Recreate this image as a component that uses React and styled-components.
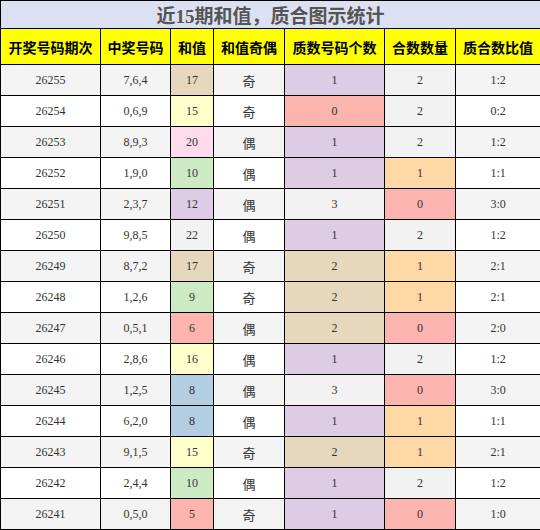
import React from "react";
import styled, { createGlobalStyle } from "styled-components";

const GlobalStyle = createGlobalStyle`
    body {
        margin: 0;
        background: #fff;
    }
`;

// Pastel1 palette used to tint the value cells
const SUM_COLORS = {
    5: "#fbb4ae",
    6: "#fbb4ae",
    8: "#b3cde3",
    9: "#ccebc5",
    10: "#ccebc5",
    12: "#decbe4",
    15: "#ffffcc",
    16: "#ffffcc",
    17: "#e5d8bd",
    20: "#fddaec",
    22: "#f2f2f2",
};
const PRIME_COLORS = { 0: "#fbb4ae", 1: "#decbe4", 2: "#e5d8bd", 3: "#f2f2f2" };
const COMPOSITE_COLORS = { 0: "#fbb4ae", 1: "#fed9a6", 2: "#f2f2f2" };

const rows = [
    ["26255", "7,6,4", 17, "奇", 1, 2],
    ["26254", "0,6,9", 15, "奇", 0, 2],
    ["26253", "8,9,3", 20, "偶", 1, 2],
    ["26252", "1,9,0", 10, "偶", 1, 1],
    ["26251", "2,3,7", 12, "偶", 3, 0],
    ["26250", "9,8,5", 22, "偶", 1, 2],
    ["26249", "8,7,2", 17, "奇", 2, 1],
    ["26248", "1,2,6", 9, "奇", 2, 1],
    ["26247", "0,5,1", 6, "偶", 2, 0],
    ["26246", "2,8,6", 16, "偶", 1, 2],
    ["26245", "1,2,5", 8, "偶", 3, 0],
    ["26244", "6,2,0", 8, "偶", 1, 1],
    ["26243", "9,1,5", 15, "奇", 2, 1],
    ["26242", "2,4,4", 10, "偶", 1, 2],
    ["26241", "0,5,0", 5, "奇", 1, 0],
];

const headers = ["开奖号码期次", "中奖号码", "和值", "和值奇偶", "质数号码个数", "合数数量", "质合数比值"];
const widths = [100, 70, 43, 71, 100, 71, 85];

const App = () => {
    return (
        <>
            <GlobalStyle />
            <Table>
                <colgroup>
                    {widths.map((w, i) => (
                        <col key={i} style={{ width: w }} />
                    ))}
                </colgroup>
                <thead>
                    <tr>
                        <Title colSpan={7}>近15期和值，质合图示统计</Title>
                    </tr>
                    <tr>
                        {headers.map((h) => (
                            <Head key={h}>{h}</Head>
                        ))}
                    </tr>
                </thead>
                <tbody>
                    {rows.map(([issue, nums, sum, parity, prime, comp], i) => (
                        <Row key={issue} $striped={i % 2 === 0}>
                            <Cell>{issue}</Cell>
                            <Cell>{nums}</Cell>
                            <Cell $bg={SUM_COLORS[sum]}>{sum}</Cell>
                            <Parity>{parity}</Parity>
                            <Cell $bg={PRIME_COLORS[prime]}>{prime}</Cell>
                            <Cell $bg={COMPOSITE_COLORS[comp]}>{comp}</Cell>
                            <Cell>{prime}:{comp}</Cell>
                        </Row>
                    ))}
                </tbody>
            </Table>
        </>
    );
};

const Table = styled.table`
    width: 540px;
    table-layout: fixed;
    border-collapse: collapse;
    border: 1px solid #000;
`;

const Title = styled.th`
    height: 27px;
    padding: 0;
    background: #dce1f1;
    border: 1px solid #000;
    color: #555;
    font-family: "Liberation Serif", "Noto Sans CJK SC", serif;
    font-size: 19px;
    font-weight: bold;
    text-align: center;
    vertical-align: middle;
`;

const Head = styled.th`
    height: 35px;
    padding: 0;
    background: #ffff00;
    border: 1px solid #000;
    color: #000;
    font-family: "Noto Sans CJK SC", sans-serif;
    font-size: 14px;
    font-weight: bold;
    text-align: center;
    white-space: nowrap;
`;

const Row = styled.tr`
    background: ${(p) => (p.$striped ? "#f4f4f4" : "#fff")};
`;

const Cell = styled.td`
    height: 30px;
    padding: 0;
    border: 1px solid #000;
    background: ${(p) => p.$bg || "transparent"};
    color: #333;
    font-family: "Liberation Serif", "Noto Sans CJK SC", serif;
    font-size: 12px;
    text-align: center;
    vertical-align: middle;
`;

const Parity = styled(Cell)`
    color: #333;
    font-family: "Noto Sans CJK SC", sans-serif;
    font-size: 13px;
`;

export default App;
